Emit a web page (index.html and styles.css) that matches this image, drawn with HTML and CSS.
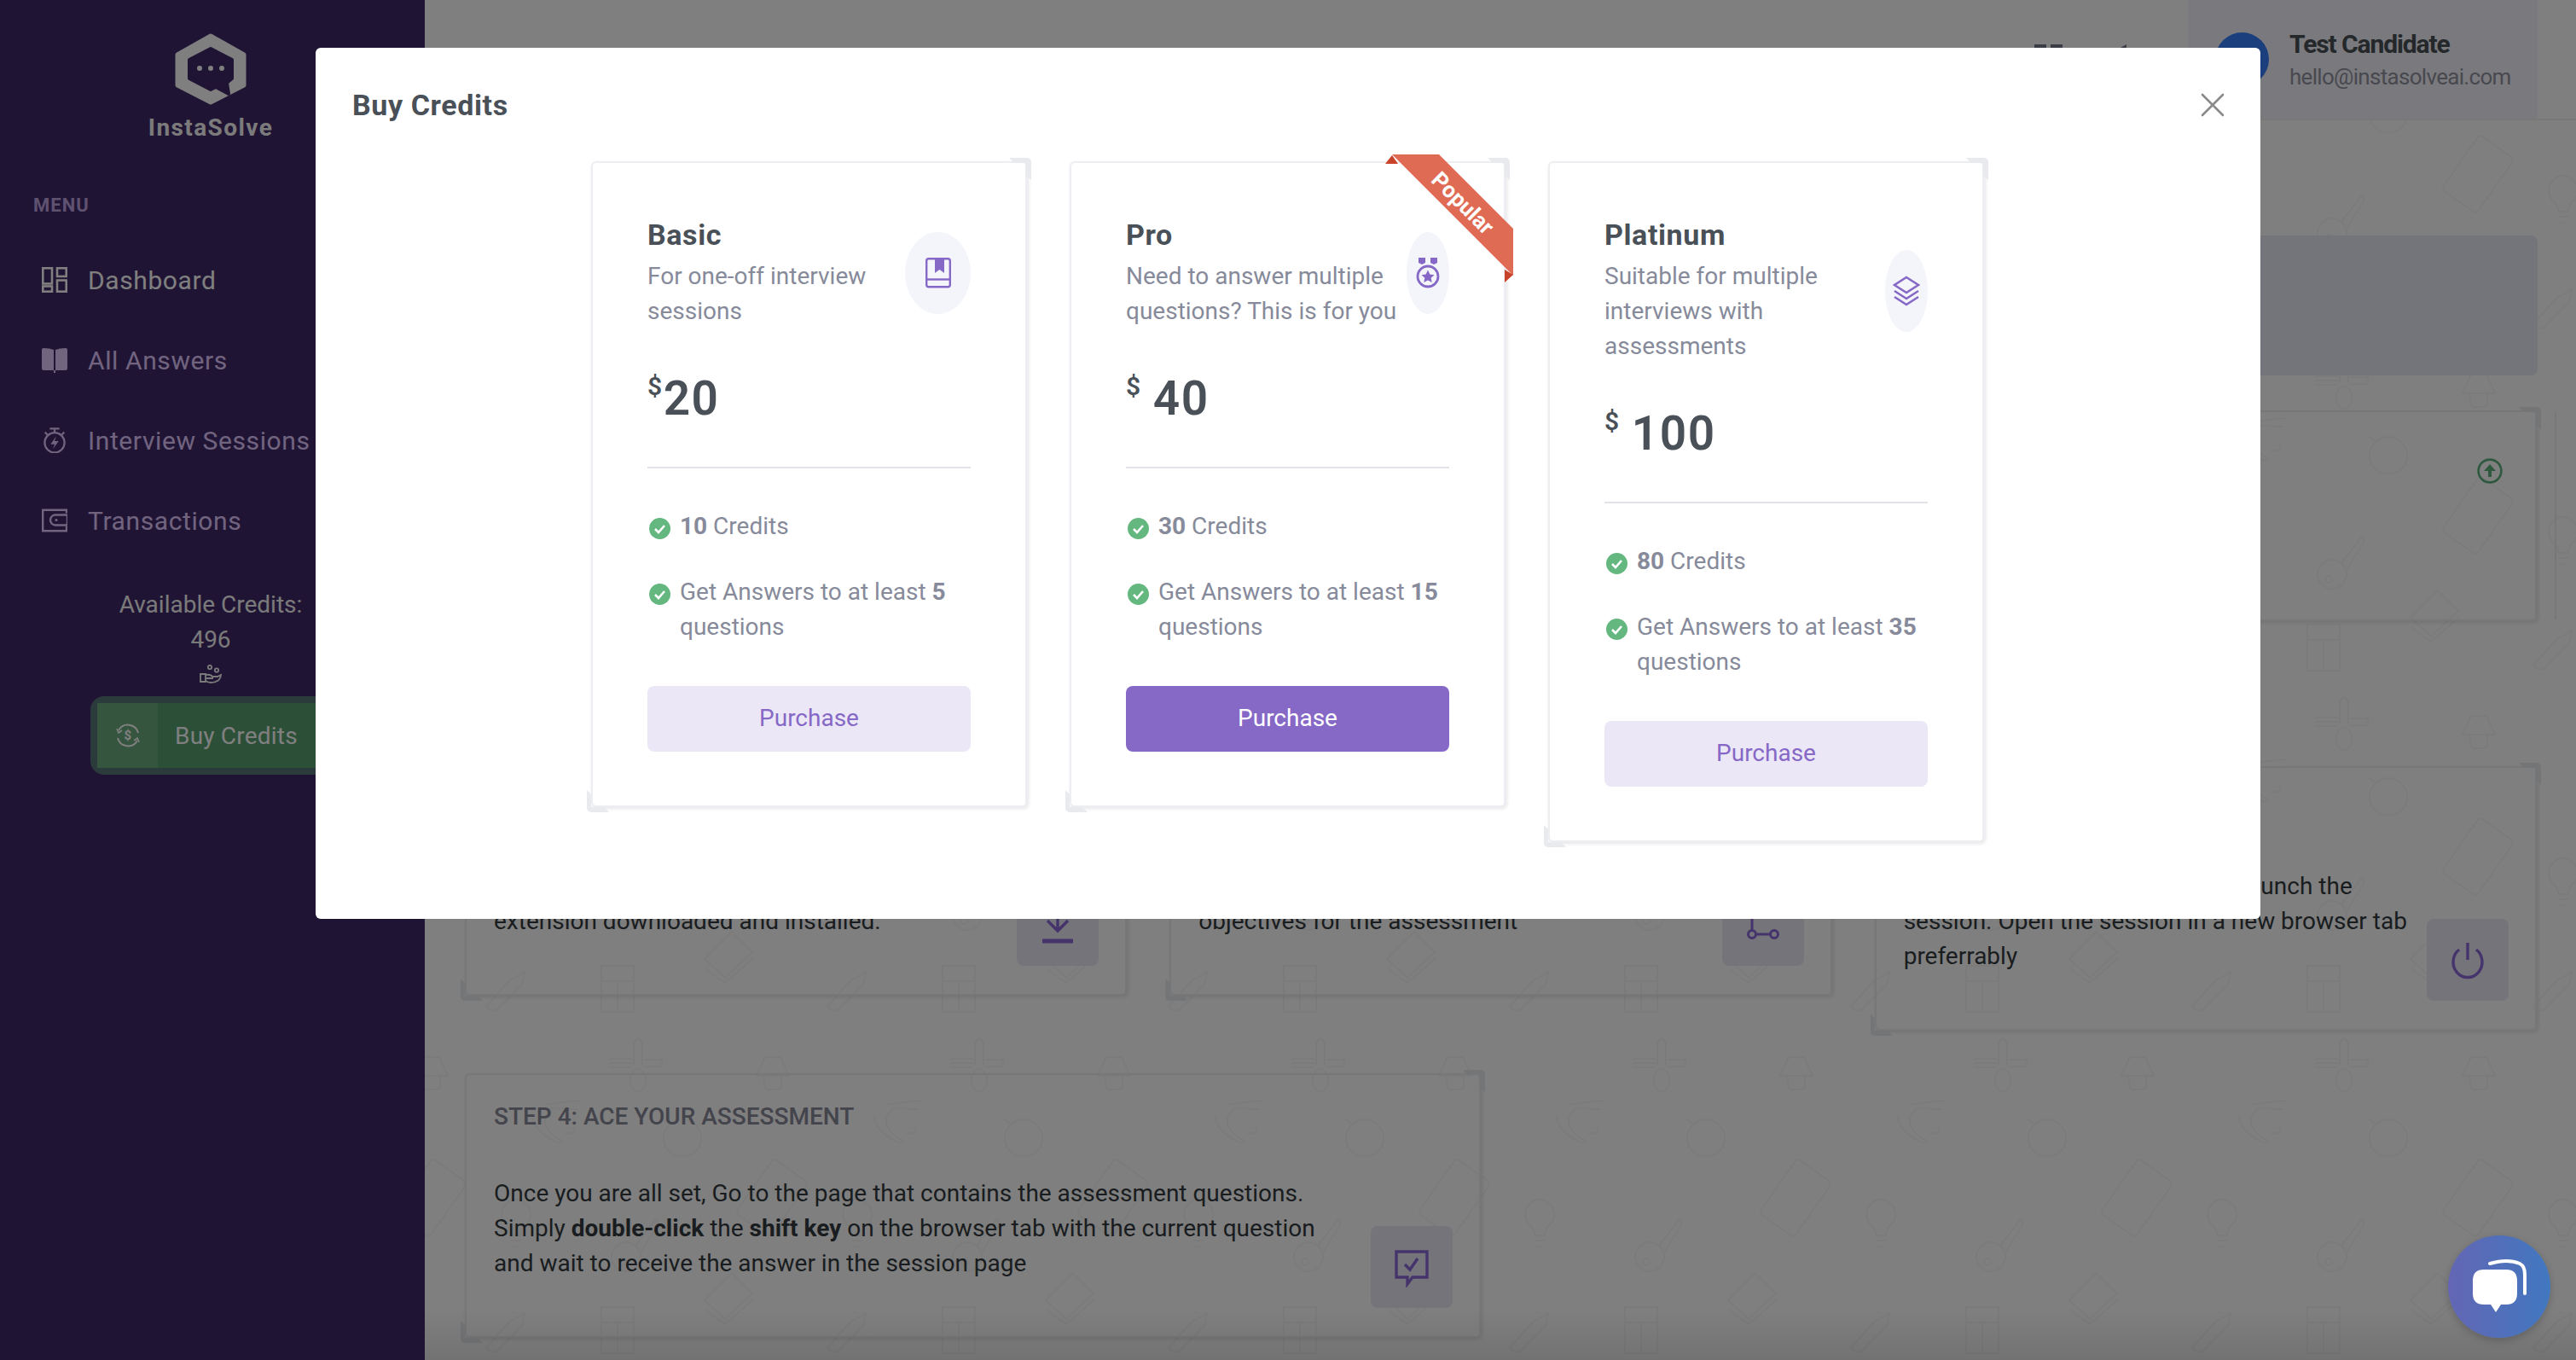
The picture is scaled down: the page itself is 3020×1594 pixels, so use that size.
FILE: index.html
```html
<!DOCTYPE html>
<html lang="en">
<head>
  <meta charset="UTF-8" />
  <meta name="viewport" content="width=device-width, initial-scale=1" />
  <title>InstaSolve - Buy Credits</title>
  <link rel="stylesheet" href="styles.css">
</head>
<body>
  <div class="page">
    <!-- Sidebar -->
    <aside class="sidebar">
      <div class="brand">
        <svg class="brand-logo" viewBox="0 0 90 84">
          <path d="M45 3 84 25V61L45 81 6 61V25Z" fill="#fff" stroke="#fff" stroke-width="5" stroke-linejoin="round"/>
          <path d="M45 18 70 31V53L64 58 66 71 51 63 45 66 20 53V31Z" fill="#402868" stroke="#402868" stroke-width="4" stroke-linejoin="round"/>
          <circle cx="32" cy="41" r="3" fill="#fff"/>
          <circle cx="45" cy="41" r="3" fill="#fff"/>
          <circle cx="58" cy="41" r="3" fill="#fff"/>
        </svg>
        <div class="brand-name">InstaSolve</div>
      </div>

      <div class="menu-title">MENU</div>
      <ul class="menu">
        <li class="menu-item active">
          <svg class="menu-icon" viewBox="0 0 28 28" fill="none" stroke="currentColor" stroke-width="2.4">
            <rect x="1.2" y="1.2" width="10" height="17"/>
            <rect x="16.8" y="1.2" width="10" height="9"/>
            <rect x="1.2" y="21" width="10" height="5.8"/>
            <rect x="16.8" y="14.5" width="10" height="12.3"/>
          </svg>
          Dashboard
        </li>
        <li class="menu-item">
          <svg class="menu-icon" viewBox="0 0 30 30" fill="currentColor">
            <path d="M0 3Q0 1 2 1 9 1 14 3V27H2Q0 27 0 25Z"/>
            <path d="M30 3Q30 1 28 1 21 1 16 3V27H28Q30 27 30 25Z"/>
            <rect x="14" y="27" width="2" height="3"/>
          </svg>
          All Answers
        </li>
        <li class="menu-item">
          <svg class="menu-icon" viewBox="0 0 28 32" fill="none" stroke="currentColor" stroke-width="2.4">
            <circle cx="14" cy="19" r="12.4"/>
            <path d="M8 1.5H20M14 2V6M2 6 5 9M26 6 23 9"/>
            <path d="M16 11 9 21H14L12 27 19 17H14Z" fill="currentColor" stroke="none"/>
          </svg>
          Interview Sessions
        </li>
        <li class="menu-item">
          <svg class="menu-icon" viewBox="0 0 30 27" fill="none" stroke="currentColor" stroke-width="2.4">
            <path d="M29 5V1.2H1.2V25.8H29V20"/>
            <path d="M30 7H16A6 6 0 0 0 16 19H30Z"/>
            <circle cx="17" cy="13" r="1.6" fill="currentColor" stroke="none"/>
          </svg>
          Transactions
        </li>
      </ul>

      <div class="credits">
        Available Credits:<br>496
        <svg class="credits-icon" viewBox="0 0 26 22" fill="none" stroke="currentColor" stroke-width="1.8">
          <circle cx="12" cy="3" r="2.2"/>
          <circle cx="20" cy="6.5" r="2.2"/>
          <path d="M1 11H7V20H1Z"/>
          <path d="M7 12Q13 11 15 14H21L25 12Q24 21 13 21Q10 21 7 19M8 16H16"/>
        </svg>
      </div>

      <button class="buy-btn">
        <span class="buy-btn-icon">
          <svg viewBox="0 0 28 28" fill="none" stroke="currentColor" stroke-width="2">
            <path d="M3 8A12.5 12.5 0 0 1 26 11M25 20A12.5 12.5 0 0 1 2 17"/>
            <path d="M1 6 3 11 7 8M27 22 25 17 21 20" stroke-width="1.6"/>
            <text x="14" y="19" font-size="15" font-weight="700" text-anchor="middle" fill="currentColor" stroke="none">$</text>
          </svg>
        </span>
        <span class="buy-btn-label">Buy Credits</span>
      </button>
    </aside>

    <!-- Dashboard behind the modal -->
    <main class="main">
      <svg class="doodles" width="100%" height="100%">
        <defs>
          <pattern id="doodle" width="400" height="400" patternUnits="userSpaceOnUse" patternTransform="translate(302 394)">
            <g fill="none" stroke="#f7f7f7" stroke-width="2" stroke-linejoin="round" stroke-linecap="round">
              <path d="M97 45H115L125 67H87ZM96 67V78Q96 83 101 83H111Q116 83 116 78V67"/>
              <path d="M343 54V29Q348 18 353 29V54M315 47H340M315 52H340M315 57H340M356 48H376V56H356"/>
              <ellipse cx="348" cy="72" rx="9" ry="13"/>
              <path d="M245 107Q228 125 258 143M224 115Q228 135 256 146M242 100 280 96M246 105 276 106M262 134Q278 136 273 128"/>
              <circle cx="0" cy="140" r="22"/>
              <circle cx="400" cy="140" r="22"/>
              <path d="M378 118 386 124"/>
              <rect x="80" y="171" width="50" height="78" rx="5" transform="rotate(35 105 210)"/>
              <path d="M199 254Q199 245 192 240A17 17 0 1 1 218 240Q211 245 211 254ZM200 260H210M202 267H208"/>
              <circle cx="334" cy="279" r="17"/>
              <circle cx="330" cy="285" r="4"/>
              <path d="M345 266 368 236 372 240 352 272"/>
              <path d="M26 330 58 298 82 322 50 352ZM28 342 50 358 82 330"/>
              <path d="M170 385 198 355 215 345 212 360 182 390Q172 392 170 385Z"/>
              <path d="M305 338H343V392H305ZM305 356H343M324 356V392"/>
            </g>
          </pattern>
        </defs>
        <rect width="100%" height="100%" fill="url(#doodle)"/>
      </svg>

      <header class="topbar">
        <div class="topbar-icons">
          <svg viewBox="0 0 34 34" fill="#74788d">
            <rect x="0" y="0" width="14" height="14"/>
            <rect x="19" y="0" width="14" height="14"/>
          </svg>
          <svg viewBox="0 0 24 34" fill="#74788d">
            <path d="M4 10 22 0V30Z"/>
          </svg>
        </div>
        <div class="user-box">
          <span class="avatar"></span>
          <div class="user-info">
            <div class="user-name">Test Candidate</div>
            <div class="user-mail">hello@instasolveai.com</div>
          </div>
        </div>
      </header>

      <div class="content">
        <div class="banner"></div>

        <div class="panel upload-panel">
          <svg class="upload-icon" viewBox="0 0 30 30">
            <circle cx="15" cy="15" r="13.4" fill="none" stroke="#5fb27e" stroke-width="2.6"/>
            <path d="M15 7 22 15H17V22H13V15H8Z" fill="#5fb27e"/>
          </svg>
          <span class="upload-rail"></span>
        </div>

        <div class="steps">
          <div class="panel step">
            <div class="step-title">STEP 1: GET THE EXTENSION</div>
            <div class="step-body">
              <p class="step-text">Make sure you have the InstaSolve browser<br>extension downloaded and installed.</p>
              <div class="step-icon">
                <svg viewBox="0 0 48 48" fill="none" stroke="currentColor" stroke-width="3.4">
                  <path d="M24 3V30M12 19 24 31 36 19"/>
                  <path d="M6 43H42" stroke-width="5"/>
                </svg>
              </div>
            </div>
          </div>
          <div class="panel step">
            <div class="step-title">STEP 2: CREATE A SESSION</div>
            <div class="step-body">
              <p class="step-text">Create a new session and set your key<br>objectives for the assessment</p>
              <div class="step-icon">
                <svg viewBox="0 0 48 48" fill="none" stroke="currentColor" stroke-width="3">
                  <circle cx="11" cy="35" r="4.5"/>
                  <circle cx="37" cy="35" r="4.5"/>
                  <path d="M11 30V14Q11 8 17 8H22M22 8 17 3M22 8 17 13M15 35H33"/>
                </svg>
              </div>
            </div>
          </div>
          <div class="panel step">
            <div class="step-title">STEP 3: START THE SESSION</div>
            <div class="step-body">
              <p class="step-text">Go into your sessions page and launch the<br>session. Open the session in a new browser tab<br>preferrably</p>
              <div class="step-icon">
                <svg viewBox="0 0 48 48" fill="none" stroke="currentColor" stroke-width="3.4">
                  <path d="M24 4V24"/>
                  <path d="M14 12A17 18 0 1 0 34 12"/>
                </svg>
              </div>
            </div>
          </div>
        </div>

        <div class="panel step step-wide">
          <div class="step-title">STEP 4: ACE YOUR ASSESSMENT</div>
          <div class="step-body">
            <p class="step-text">Once you are all set, Go to the page that contains the assessment questions.<br>Simply <b>double-click</b> the <b>shift key</b> on the browser tab with the current question<br>and wait to receive the answer in the session page</p>
            <div class="step-icon">
              <svg viewBox="0 0 48 48" fill="none" stroke="currentColor" stroke-width="3.4">
                <path d="M6 6H42V36H25L19 44V36H6Z"/>
                <path d="M16 21 22 27 31 14"/>
              </svg>
            </div>
          </div>
        </div>
      </div>
    </main>
  </div>

  <div class="backdrop"></div>

  <!-- Buy Credits modal -->
  <section class="modal">
    <div class="modal-head">
      <h2 class="modal-title">Buy Credits</h2>
      <svg class="modal-close" viewBox="0 0 28 28" fill="none" stroke="#8a8a8a" stroke-width="2.6" stroke-linecap="round">
        <path d="M2 2 26 26M26 2 2 26"/>
      </svg>
    </div>
    <div class="plans">

      <div class="panel plan">
        <div class="plan-head">
          <div class="plan-info">
            <h3 class="plan-name">Basic</h3>
            <p class="plan-desc">For one-off interview<br>sessions</p>
          </div>
          <div class="plan-icon plan-icon-wide">
            <svg viewBox="0 0 30 36" width="30" height="36" fill="none" stroke="#8668c6" stroke-width="2.4">
              <rect x="1.2" y="1.2" width="27.6" height="33" rx="2.5"/>
              <path d="M1.5 25.5H28.5"/>
              <path d="M11 1H22V18L16.5 14 11 18Z" fill="#8668c6" stroke="none"/>
            </svg>
          </div>
        </div>
        <div class="price"><span class="currency">$</span>20</div>
        <hr class="plan-rule">
        <ul class="features">
          <li class="feature">
            <svg class="check" viewBox="0 0 25 25"><circle cx="12.5" cy="12.5" r="12.5" fill="#63b77f"/><path d="M7 13 11 17 18 9" fill="none" stroke="#fff" stroke-width="2.6"/></svg>
            <span><b>10</b> Credits</span>
          </li>
          <li class="feature">
            <svg class="check" viewBox="0 0 25 25"><circle cx="12.5" cy="12.5" r="12.5" fill="#63b77f"/><path d="M7 13 11 17 18 9" fill="none" stroke="#fff" stroke-width="2.6"/></svg>
            <span>Get Answers to at least <b>5</b><br>questions</span>
          </li>
        </ul>
        <button class="purchase">Purchase</button>
      </div>

      <div class="panel plan">
        <div class="ribbon">
          <div class="ribbon-band"><span class="ribbon-text">Popular</span></div>
        </div>
        <div class="plan-head">
          <div class="plan-info">
            <h3 class="plan-name">Pro</h3>
            <p class="plan-desc">Need to answer multiple<br>questions? This is for you</p>
          </div>
          <div class="plan-icon">
            <svg viewBox="0 0 28 36" width="28" height="36" fill="#8668c6">
              <path d="M3 0H11V6L7 8 3 6ZM17 0H25V6L21 8 17 6Z"/>
              <circle cx="14" cy="22" r="12" fill="none" stroke="#8668c6" stroke-width="2.8"/>
              <path d="M14 14.5 16.3 19.5 21.5 20.2 17.7 23.8 18.7 29 14 26.4 9.3 29 10.3 23.8 6.5 20.2 11.7 19.5Z"/>
            </svg>
          </div>
        </div>
        <div class="price"><span class="currency">$</span> 40</div>
        <hr class="plan-rule">
        <ul class="features">
          <li class="feature">
            <svg class="check" viewBox="0 0 25 25"><circle cx="12.5" cy="12.5" r="12.5" fill="#63b77f"/><path d="M7 13 11 17 18 9" fill="none" stroke="#fff" stroke-width="2.6"/></svg>
            <span><b>30</b> Credits</span>
          </li>
          <li class="feature">
            <svg class="check" viewBox="0 0 25 25"><circle cx="12.5" cy="12.5" r="12.5" fill="#63b77f"/><path d="M7 13 11 17 18 9" fill="none" stroke="#fff" stroke-width="2.6"/></svg>
            <span>Get Answers to at least <b>15</b><br>questions</span>
          </li>
        </ul>
        <button class="purchase purchase-main">Purchase</button>
      </div>

      <div class="panel plan">
        <div class="plan-head">
          <div class="plan-info">
            <h3 class="plan-name">Platinum</h3>
            <p class="plan-desc">Suitable for multiple<br>interviews with<br>assessments</p>
          </div>
          <div class="plan-icon">
            <svg viewBox="0 0 32 36" width="32" height="36" fill="none" stroke="#8668c6" stroke-width="2.6">
              <path d="M16 2 30 11 16 20 2 11Z"/>
              <path d="M2 18 16 27 30 18M2 25 16 34 30 25"/>
            </svg>
          </div>
        </div>
        <div class="price"><span class="currency">$</span> 100</div>
        <hr class="plan-rule">
        <ul class="features">
          <li class="feature">
            <svg class="check" viewBox="0 0 25 25"><circle cx="12.5" cy="12.5" r="12.5" fill="#63b77f"/><path d="M7 13 11 17 18 9" fill="none" stroke="#fff" stroke-width="2.6"/></svg>
            <span><b>80</b> Credits</span>
          </li>
          <li class="feature">
            <svg class="check" viewBox="0 0 25 25"><circle cx="12.5" cy="12.5" r="12.5" fill="#63b77f"/><path d="M7 13 11 17 18 9" fill="none" stroke="#fff" stroke-width="2.6"/></svg>
            <span>Get Answers to at least <b>35</b><br>questions</span>
          </li>
        </ul>
        <button class="purchase">Purchase</button>
      </div>

    </div>
  </section>

  <!-- Chat widget -->
  <div class="chat">
    <svg viewBox="0 0 120 120" width="120" height="120">
      <path d="M49 33Q70 27 84 33 90 36 90 46V68" fill="none" stroke="#fff" stroke-width="4" stroke-linecap="round"/>
      <path d="M29 53Q29 40 42 40H68Q81 40 81 53V68Q81 81 68 81H62L56 90 50 81H42Q29 81 29 68Z" fill="#fff"/>
    </svg>
  </div>
</body>
</html>
```

FILE: styles.css
```css
* {
  box-sizing: border-box;
}

body {
  margin: 0;
  height: 100vh;
  overflow: hidden;
  background: #fff;
  font-family: Roboto, "Liberation Sans", sans-serif;
  font-size: 28px;
  line-height: 41px;
  color: #343a40;
}

b {
  font-weight: 700;
}

.page {
  display: flex;
  height: 100vh;
}

/* sidebar */
.sidebar {
  flex: 0 0 498px;
  padding: 41px 4px 0 0;
  background: #402868;
  color: #e0c8ff;
}

.brand {
  display: flex;
  flex-direction: column;
  align-items: center;
}

.brand-logo {
  width: 90px;
  height: 84px;
  margin-top: -2px;
}

.brand-name {
  margin-top: 9px;
  font-size: 28px;
  line-height: 36px;
  font-weight: 700;
  letter-spacing: 1.4px;
  color: #f6f6f6;
}

.menu-title {
  margin: 58px 0 0 39px;
  font-size: 22px;
  line-height: 30px;
  font-weight: 700;
  letter-spacing: 1px;
  color: #bca4e0;
}

.menu {
  list-style: none;
  margin: 25px 0 0;
  padding: 0;
}

.menu-item {
  display: flex;
  align-items: center;
  height: 94px;
  padding-left: 49px;
  gap: 24px;
  font-size: 30px;
  letter-spacing: 0.6px;
  white-space: nowrap;
}

.menu-item.active {
  color: #fff;
}

.menu-icon {
  flex: 0 0 30px;
  width: 30px;
  height: 30px;
}

.credits {
  margin-top: 31px;
  text-align: center;
  color: #f4f4f4;
}

.credits-icon {
  display: block;
  width: 26px;
  height: 22px;
  margin: 9px auto 0;
}

.buy-btn {
  display: flex;
  align-items: stretch;
  width: 286px;
  height: 92px;
  margin: 15px 0 0 106px;
  padding: 0;
  border: 8px solid #567474;
  border-radius: 16px;
  background: #589e70;
  background-clip: padding-box;
  color: #fff;
  font: inherit;
  letter-spacing: 0.2px;
}

.buy-btn-icon {
  display: flex;
  align-items: center;
  justify-content: center;
  width: 71px;
  background: #6aaa7e;
}

.buy-btn-icon svg {
  width: 28px;
  height: 28px;
}

.buy-btn-label {
  display: flex;
  align-items: center;
  padding-left: 20px;
  white-space: nowrap;
}

/* main area */
.main {
  position: relative;
  flex: 1;
  min-width: 0;
  overflow: hidden;
}

.main::after {
  content: "";
  position: absolute;
  left: 0;
  right: 0;
  bottom: 0;
  height: 60px;
  background: linear-gradient(rgba(0, 0, 0, 0), rgba(0, 0, 0, 0.1));
}

.doodles {
  position: absolute;
  top: 0;
  left: 0;
}

.topbar {
  position: relative;
  display: flex;
  justify-content: flex-end;
  height: 141px;
  padding-right: 45px;
  border-bottom: 2px solid #f0f2ee;
  background: #fff;
}

.topbar-icons {
  display: flex;
  gap: 52px;
  margin: 52px 70px 0 0;
}

.topbar-icons svg {
  height: 34px;
}

.topbar-icons svg:first-child {
  width: 34px;
}

.topbar-icons svg:last-child {
  width: 24px;
}

.user-box {
  display: flex;
  align-items: center;
  gap: 24px;
  width: 410px;
  padding-left: 32px;
  background: #f5f5fc;
}

.avatar {
  width: 63px;
  height: 63px;
  border-radius: 50%;
  background: #377ef8;
}

.user-name {
  font-size: 30px;
  line-height: 40px;
  font-weight: 700;
  letter-spacing: -1.1px;
  color: #495057;
}

.user-mail {
  font-size: 26px;
  line-height: 36px;
  letter-spacing: -0.7px;
  color: #90909e;
}

.content {
  position: relative;
  padding: 135px 45px 0 47px;
}

.banner {
  height: 164px;
  border-radius: 8px;
  background: #e8e8f6;
}

/* cards, also used for the plans */
.panel {
  position: relative;
  border: 2px solid #eceef1;
  border-right-width: 3px;
  border-radius: 6px;
  box-shadow: 1px 2px 4px rgba(0, 0, 0, 0.1);
}

.panel::before,
.panel::after {
  content: "";
  position: absolute;
  width: 26px;
  height: 26px;
  background: #e8eaed;
}

.panel::before {
  top: -6px;
  right: -7px;
  border-top-right-radius: 5px;
  clip-path: polygon(0 0, 100% 0, 100% 100%, 20px 21px, 20px 6px, 6px 6px);
}

.panel::after {
  bottom: -8px;
  left: -7px;
  border-bottom-left-radius: 5px;
  clip-path: polygon(0 0, 5px 5px, 5px 20px, 20px 20px, 26px 100%, 0 100%);
}

.upload-panel {
  display: flex;
  justify-content: flex-end;
  height: 247px;
  margin-top: 41px;
  padding: 54px 38px;
}

.upload-icon {
  width: 30px;
  height: 30px;
}

.upload-rail {
  position: absolute;
  top: 0;
  bottom: 0;
  right: -25px;
  width: 2px;
  background: #eee;
}

.steps {
  display: grid;
  grid-template-columns: repeat(3, 1fr);
  gap: 49px;
  align-items: start;
  margin-top: 170px;
}

.step {
  padding: 31px 31px 33px 32px;
}

.step-wide {
  width: 1192px;
  margin-top: 50px;
}

.step-title {
  margin-bottom: 51px;
  font-size: 28px;
  line-height: 36px;
  font-weight: 500;
  color: #888898;
}

.step-body {
  display: flex;
  justify-content: space-between;
  align-items: flex-end;
}

.step-text {
  margin: 0 0 32px;
  white-space: nowrap;
}

.step-icon {
  display: flex;
  flex: 0 0 96px;
  align-items: center;
  justify-content: center;
  height: 96px;
  border-radius: 8px;
  background: #eae9f7;
  color: #8a68d8;
}

.step-icon svg {
  width: 48px;
  height: 48px;
}

/* modal */
.backdrop {
  position: fixed;
  top: 0;
  left: 0;
  right: 0;
  bottom: 0;
  z-index: 10;
  background-color: rgba(0, 0, 0, 0.5);
}

.modal {
  position: fixed;
  top: 56px;
  left: 370px;
  z-index: 20;
  width: 2280px;
  padding-bottom: 90px;
  border-radius: 6px;
  background: #fff;
}

.modal-head {
  display: flex;
  align-items: center;
  justify-content: space-between;
  height: 133px;
  padding: 0 42px 0 43px;
}

.modal-title {
  margin: 0;
  font-size: 34px;
  line-height: 40px;
  font-weight: 700;
  letter-spacing: 0.6px;
  color: #495057;
}

.modal-close {
  width: 28px;
  height: 28px;
}

.plans {
  display: flex;
  justify-content: center;
  align-items: flex-start;
  gap: 49px;
}

.plan {
  width: 512px;
  padding: 64px 64px 63px;
  background: #fff;
}

.plan-head {
  display: flex;
  justify-content: space-between;
  align-items: center;
}

.plan-name {
  margin: 0 0 8px;
  font-size: 34px;
  line-height: 40px;
  font-weight: 700;
  letter-spacing: 0.6px;
  color: #495057;
}

.plan-desc {
  margin: 0;
  white-space: nowrap;
  color: #868a9a;
}

.plan-icon {
  display: flex;
  flex: 0 0 50px;
  align-items: center;
  justify-content: center;
  height: 96px;
  border-radius: 50%;
  background: #f4f5fa;
}

.plan-icon-wide {
  flex-basis: 77px;
}

.price {
  margin-top: 55px;
  font-size: 55px;
  line-height: 54px;
  font-weight: 600;
  letter-spacing: 1.5px;
  word-spacing: -2px;
  color: #495057;
}

.currency {
  font-size: 30px;
  line-height: 0;
  vertical-align: 23px;
}

.plan-rule {
  height: 2px;
  margin: 53px 0 47px;
  border: 0;
  background: #e2e2e8;
}

.features {
  list-style: none;
  margin: 0;
  padding: 0;
}

.feature {
  display: flex;
  gap: 11px;
  padding-left: 2px;
  color: #868a9a;
  white-space: nowrap;
}

.feature + .feature {
  margin-top: 36px;
}

.check {
  flex: 0 0 25px;
  width: 25px;
  height: 25px;
  margin-top: 11px;
}

.purchase {
  display: block;
  width: 100%;
  height: 77px;
  margin-top: 49px;
  padding: 0 0 2px;
  border: 0;
  border-radius: 8px;
  background: #ebe7f7;
  color: #8668c6;
  font: inherit;
}

.purchase-main {
  background: #8668c6;
  color: #fff;
}

/* corner ribbon */
.ribbon {
  position: absolute;
  top: -10px;
  right: -11px;
  z-index: 1;
  width: 150px;
  height: 150px;
}

.ribbon::before,
.ribbon::after {
  content: "";
  position: absolute;
  background: #c9432b;
}

.ribbon::before {
  top: 1px;
  left: 0;
  width: 15px;
  height: 10px;
  clip-path: polygon(0 100%, 8px 0, 100% 100%);
}

.ribbon::after {
  right: 0;
  bottom: 0;
  width: 10px;
  height: 15px;
  clip-path: polygon(0 0, 100% 40%, 0 100%);
}

.ribbon-band {
  position: absolute;
  top: 0;
  left: 0;
  width: 150px;
  height: 150px;
  background: #e06b55;
  clip-path: polygon(8px 0, 63px 0, 150px 87px, 150px 142px);
}

.ribbon-text {
  position: absolute;
  top: 37px;
  left: 41px;
  width: 100px;
  height: 40px;
  transform: rotate(45deg);
  text-align: center;
  font-size: 26px;
  line-height: 40px;
  font-weight: 700;
  color: #fff;
}

/* chat button */
.chat {
  position: fixed;
  right: 30px;
  bottom: 26px;
  z-index: 30;
  width: 120px;
  height: 120px;
  border-radius: 50%;
  background: linear-gradient(90deg, #6366b4, #4178c0);
  box-shadow: 0 3px 10px rgba(0, 0, 0, 0.2);
}

.chat svg {
  display: block;
}
```
